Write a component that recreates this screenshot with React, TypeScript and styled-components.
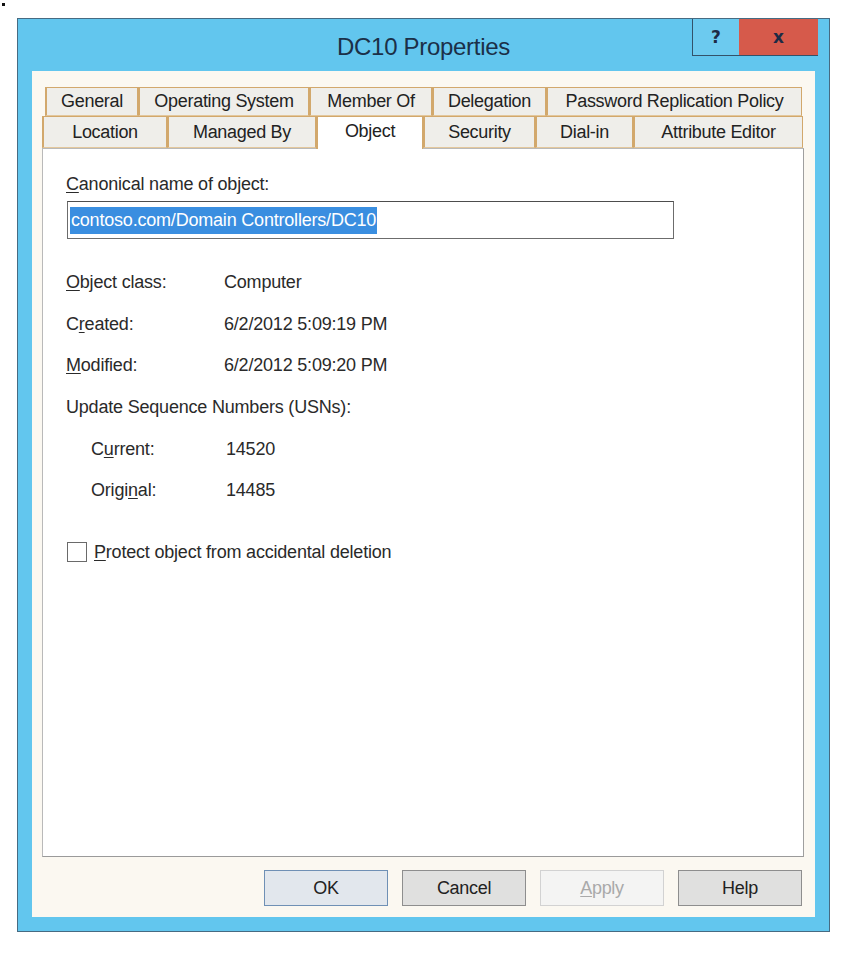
import React from 'react';
import styled, { createGlobalStyle } from 'styled-components';

const GlobalStyle = createGlobalStyle`
  html, body {
    margin: 0;
    padding: 0;
    background: #ffffff;
    font-family: "Liberation Sans", Arial, sans-serif;
    color: #2a2a2a;
  }
`;

const Page = styled.div`
  width: 848px;
  height: 956px;
  overflow: hidden;
`;

const Dot = styled.div`
  width: 3px;
  height: 3px;
  margin: 3px 0 0 2px;
  background: #111;
`;

const Window = styled.div`
  width: 813px;
  box-sizing: border-box;
  margin: 12px 0 0 17px;
  border: 1px solid #476b82;
  background: #62c6ee;
  padding: 0 14px 14px 14px;
`;

const TitleBar = styled.div`
  height: 52px;
  margin: 0 -14px;
  display: grid;
  grid-template-columns: 1fr auto 1fr;
  align-items: start;
`;

const Title = styled.div`
  grid-column: 2;
  padding-top: 14px;
  font-size: 24px;
  color: #1b3048;
  letter-spacing: -0.3px;
`;

const Controls = styled.div`
  grid-column: 3;
  justify-self: end;
  margin-right: 11px;
  display: flex;
  height: 36px;
  border-left: 1px solid #33526a;
  border-bottom: 1px solid #33526a;
`;

const CaptionButton = styled.div<{ $w: number; $bg: string }>`
  width: ${(p) => p.$w}px;
  display: flex;
  align-items: center;
  justify-content: center;
  background: ${(p) => p.$bg};
  color: #1d2b45;
  font-family: "DejaVu Sans", sans-serif;
  font-weight: bold;
  font-size: 17px;
`;

const Client = styled.div`
  background: #fbf8f1;
  padding: 16px 11px 11px 10px;
`;

const TabRow = styled.div<{ $indent?: number }>`
  display: flex;
  padding-left: ${(p) => p.$indent || 0}px;
`;

const Tab = styled.div<{ $w: number; $h: number; $active?: boolean }>`
  width: ${(p) => p.$w}px;
  box-sizing: border-box;
  display: flex;
  align-items: center;
  justify-content: center;
  font-size: 18px;
  color: #222;
  letter-spacing: -0.3px;
  background: ${(p) => (p.$active ? '#ffffff' : '#efeeea')};
  border: 1px solid #d2a86c;
  border-left-width: 2px;
  border-bottom: ${(p) => (p.$active ? 'none' : '1px solid #e3c79c')};
  position: relative;
  z-index: ${(p) => (p.$active ? 2 : 1)};
  margin-bottom: ${(p) => (p.$active ? '-1px' : '0')};
  height: ${(p) => (p.$active ? p.$h + 1 : p.$h)}px;
  padding-bottom: ${(p) => (p.$active ? 3 : 0)}px;
`;

const Panel = styled.div`
  width: 762px;
  height: 709px;
  box-sizing: border-box;
  background: #ffffff;
  border: 1px solid #b9b9b9;
  border-right-color: #9f9f9f;
  border-bottom-color: #9a9a9a;
  padding: 24px 23px;
  font-size: 18px;
  letter-spacing: -0.2px;
`;

const Key = styled.span`
  text-decoration: underline;
  text-underline-offset: 2px;
`;

const FieldLabel = styled.div`
  line-height: 22px;
`;

const TextField = styled.div`
  width: 607px;
  height: 38px;
  box-sizing: border-box;
  margin: 6px 0 0 1px;
  border: 1px solid #6c6c6c;
  border-top-color: #4d4d4d;
  padding: 3px 2px;
  display: flex;
  align-items: center;
`;

const Selection = styled.span`
  background: #3a8ee0;
  color: #ffffff;
  line-height: 27px;
  padding: 0 1px;
`;

const InfoList = styled.div`
  margin-top: 23px;
`;

const InfoRow = styled.div<{ $indent?: number }>`
  display: flex;
  align-items: center;
  height: 41.6px;
  padding-left: ${(p) => p.$indent || 0}px;
`;

const InfoLabel = styled.div<{ $w: number }>`
  width: ${(p) => p.$w}px;
`;

const CheckRow = styled.label`
  display: flex;
  align-items: center;
  gap: 7px;
  margin: 30px 0 0 1px;
`;

const CheckBox = styled.span`
  width: 20px;
  height: 20px;
  box-sizing: border-box;
  border: 1px solid #6a6a6a;
  background: #fff;
`;

const ButtonBar = styled.div`
  display: flex;
  justify-content: flex-end;
  gap: 14px;
  margin: 13px 2px 0 0;
`;

const Button = styled.div<{ $variant?: 'default' | 'disabled' }>`
  width: 124px;
  height: 36px;
  box-sizing: border-box;
  display: flex;
  align-items: center;
  justify-content: center;
  font-size: 18px;
  letter-spacing: -0.3px;
  color: ${(p) => (p.$variant === 'disabled' ? '#a9a9a9' : '#222')};
  background: ${(p) =>
    p.$variant === 'default' ? '#e2e7ed' : p.$variant === 'disabled' ? '#f4f4f3' : '#e0e0df'};
  border: 1px solid
    ${(p) => (p.$variant === 'default' ? '#6f90b5' : p.$variant === 'disabled' ? '#d2d2d2' : '#8e8e8e')};
`;

const row1 = [
  { label: 'General', w: 93 },
  { label: 'Operating System', w: 171 },
  { label: 'Member Of', w: 123 },
  { label: 'Delegation', w: 114 },
  { label: 'Password Replication Policy', w: 256 },
];

const row2 = [
  { label: 'Location', w: 125 },
  { label: 'Managed By', w: 149 },
  { label: 'Object', w: 107, active: true },
  { label: 'Security', w: 112 },
  { label: 'Dial-in', w: 98 },
  { label: 'Attribute Editor', w: 170 },
];

export default function App() {
  return (
    <Page>
      <GlobalStyle />
      <Dot />
      <Window>
        <TitleBar>
          <Title>DC10 Properties</Title>
          <Controls>
            <CaptionButton $w={46} $bg="#6ccaef">?</CaptionButton>
            <CaptionButton $w={79} $bg="#d65a4b">x</CaptionButton>
          </Controls>
        </TitleBar>
        <Client>
          <TabRow $indent={3}>
            {row1.map((t) => (
              <Tab key={t.label} $w={t.w} $h={29}>
                {t.label}
              </Tab>
            ))}
          </TabRow>
          <TabRow>
            {row2.map((t) => (
              <Tab key={t.label} $w={t.w} $h={32} $active={t.active}>
                {t.label}
              </Tab>
            ))}
          </TabRow>
          <Panel>
            <FieldLabel>
              <Key>C</Key>anonical name of object:
            </FieldLabel>
            <TextField>
              <Selection>contoso.com/Domain Controllers/DC10</Selection>
            </TextField>
            <InfoList>
              <InfoRow>
                <InfoLabel $w={158}>
                  <Key>O</Key>bject class:
                </InfoLabel>
                Computer
              </InfoRow>
              <InfoRow>
                <InfoLabel $w={158}>
                  C<Key>r</Key>eated:
                </InfoLabel>
                6/2/2012 5:09:19 PM
              </InfoRow>
              <InfoRow>
                <InfoLabel $w={158}>
                  <Key>M</Key>odified:
                </InfoLabel>
                6/2/2012 5:09:20 PM
              </InfoRow>
              <InfoRow>Update Sequence Numbers (USNs):</InfoRow>
              <InfoRow $indent={25}>
                <InfoLabel $w={135}>
                  C<Key>u</Key>rrent:
                </InfoLabel>
                14520
              </InfoRow>
              <InfoRow $indent={25}>
                <InfoLabel $w={135}>
                  Origi<Key>n</Key>al:
                </InfoLabel>
                14485
              </InfoRow>
            </InfoList>
            <CheckRow>
              <CheckBox />
              <span>
                <Key>P</Key>rotect object from accidental deletion
              </span>
            </CheckRow>
          </Panel>
          <ButtonBar>
            <Button $variant="default">OK</Button>
            <Button>Cancel</Button>
            <Button $variant="disabled">
              <Key>A</Key>pply
            </Button>
            <Button>Help</Button>
          </ButtonBar>
        </Client>
      </Window>
    </Page>
  );
}
